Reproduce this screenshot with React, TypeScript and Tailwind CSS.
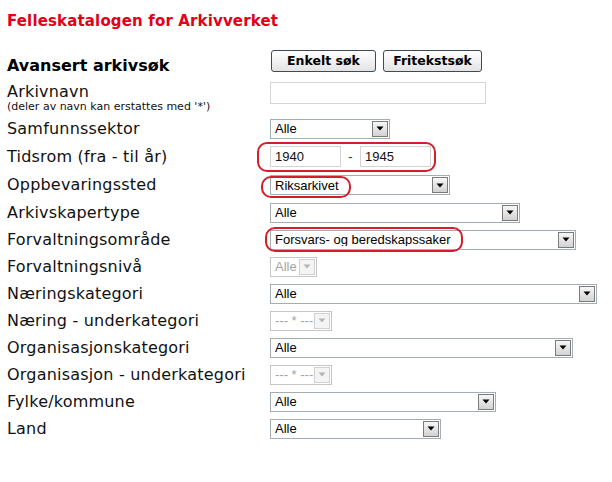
import React from 'react';

type SelectProps = {
  width: string;
  value: string;
  disabled?: boolean;
};

function Select({ width, value, disabled }: SelectProps) {
  return (
    <div
      className={`${width} h-[20px] flex items-center justify-between bg-white border ${
        disabled ? 'border-[#c6c6c6] text-[#a3a3a3]' : 'border-[#a5acb2] text-black'
      } font-['Liberation_Sans',Arial,sans-serif] text-[13px] leading-none`}
    >
      <span className="pl-[4px] whitespace-nowrap overflow-hidden">{value}</span>
      <div
        className={`w-[16px] h-[16px] mr-px flex-none flex items-center justify-center border ${
          disabled
            ? 'border-[#d0d0d0] bg-[#f4f4f4]'
            : 'border-[#7b7b7b] bg-gradient-to-b from-[#f7f7f7] to-[#d2d2d2]'
        }`}
      >
        <svg width="8" height="5" viewBox="0 0 8 5">
          <path d="M0.5 0.5 L7.5 0.5 L4 4.5 Z" fill={disabled ? '#b4b4b4' : '#000'} />
        </svg>
      </div>
    </div>
  );
}

function Oval({ className }: { className: string }) {
  return (
    <div
      className={`absolute border-2 border-[#d21f2b] rounded-[10px] pointer-events-none ${className}`}
    />
  );
}

export default function App() {
  const rows = [
    {
      label: 'Samfunnssektor',
      h: 'h-[27px]',
      control: <Select width="w-[120px]" value="Alle" />,
    },
    {
      label: 'Tidsrom (fra - til år)',
      h: 'h-[29px]',
      control: (
        <div className="relative h-full flex items-center font-['Liberation_Sans',Arial,sans-serif] text-[13px]">
          <div className="w-[71px] h-[21px] border border-[#d4d4d4] flex items-center pl-[4px] bg-white">
            1940
          </div>
          <span className="w-[19px] text-center text-[#333]">-</span>
          <div className="w-[71px] h-[21px] border border-[#d4d4d4] flex items-center pl-[4px] bg-white">
            1945
          </div>
          <Oval className="-left-[13px] top-0 w-[179px] h-[30px]" />
        </div>
      ),
    },
    {
      label: 'Oppbevaringssted',
      h: 'h-[28px]',
      control: (
        <div className="relative h-full flex items-center">
          <Select width="w-[180px]" value="Riksarkivet" />
          <Oval className="-left-[9px] top-[5px] w-[90px] h-[22px]" />
        </div>
      ),
    },
    {
      label: 'Arkivskapertype',
      h: 'h-[27px]',
      control: <Select width="w-[250px]" value="Alle" />,
    },
    {
      label: 'Forvaltningsområde',
      h: 'h-[27px]',
      control: (
        <div className="relative h-full flex items-center">
          <Select width="w-[306px]" value="Forsvars- og beredskapssaker" />
          <Oval className="-left-[5px] top-px w-[198px] h-[25px]" />
        </div>
      ),
    },
    {
      label: 'Forvaltningsnivå',
      h: 'h-[27px]',
      control: <Select width="w-[47px]" value="Alle" disabled />,
    },
    {
      label: 'Næringskategori',
      h: 'h-[27px]',
      control: <Select width="w-[327px]" value="Alle" />,
    },
    {
      label: 'Næring - underkategori',
      h: 'h-[27px]',
      control: <Select width="w-[62px]" value="--- * ---" disabled />,
    },
    {
      label: 'Organisasjonskategori',
      h: 'h-[27px]',
      control: <Select width="w-[303px]" value="Alle" />,
    },
    {
      label: 'Organisasjon - underkategori',
      h: 'h-[27px]',
      control: <Select width="w-[62px]" value="--- * ---" disabled />,
    },
    {
      label: 'Fylke/kommune',
      h: 'h-[27px]',
      control: <Select width="w-[226px]" value="Alle" />,
    },
    {
      label: 'Land',
      h: 'h-[27px]',
      control: <Select width="w-[171px]" value="Alle" />,
    },
  ];

  return (
    <div className="w-[612px] h-[482px] bg-white overflow-hidden pl-[7px] pt-[12px] font-['DejaVu_Sans',Verdana,sans-serif] text-[#111]">
      {/* Title */}
      <h1 className="text-[15px] leading-[18px] font-bold text-[#e2001a] tracking-[0.15px]">
        Felleskatalogen for Arkivverket
      </h1>

      {/* Header row */}
      <div className="flex h-[22px] mt-[20px]">
        <div className="w-[263px] pt-[8px] text-[16px] leading-[16px] font-bold text-black">
          Avansert arkivsøk
        </div>
        <div className="flex gap-[7px] pl-px">
          <button className="w-[105px] h-[22px] border border-[#3d4a57] rounded-[3px] bg-gradient-to-b from-white to-[#e4e4e4] text-[12.5px] font-bold text-black leading-none">
            Enkelt søk
          </button>
          <button className="w-[99px] h-[22px] border border-[#3d4a57] rounded-[3px] bg-gradient-to-b from-white to-[#e4e4e4] text-[12.5px] font-bold text-black leading-none">
            Fritekstsøk
          </button>
        </div>
      </div>

      {/* Arkivnavn */}
      <div className="flex h-[33px] mt-[10px]">
        <div className="w-[263px] pt-[2px]">
          <div className="text-[16px] leading-[16px] tracking-[0.2px]">Arkivnavn</div>
          <div className="text-[11px] leading-[13px]">(deler av navn kan erstattes med '*')</div>
        </div>
        <div className="w-[216px] h-[22px] border border-[#d6d6d6] bg-white" />
      </div>

      {/* Filter rows */}
      {rows.map((r) => (
        <div key={r.label} className={`flex items-center ${r.h}`}>
          <div className="w-[263px] text-[16px] leading-[18px] tracking-[0.2px] whitespace-nowrap">
            {r.label}
          </div>
          <div className="h-full flex items-center">{r.control}</div>
        </div>
      ))}
    </div>
  );
}
